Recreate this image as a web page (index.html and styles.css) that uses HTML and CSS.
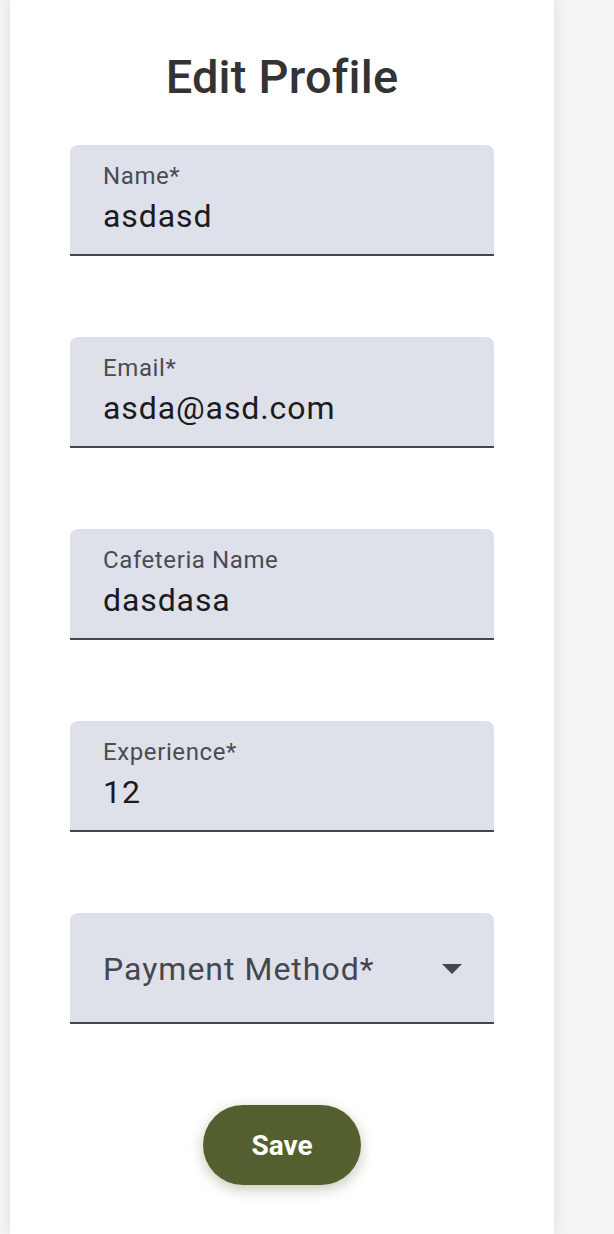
FILE: index.html
```html
<!DOCTYPE html>
<html lang="en">
<head>
<meta charset="utf-8">
<title>Edit Profile</title>
<link rel="stylesheet" href="styles.css">
</head>
<body>
<div class="page">
  <main class="card">
    <h1 class="title">Edit Profile</h1>
    <form class="form">
      <div class="field">
        <label class="label">Name*</label>
        <div class="value">asdasd</div>
      </div>
      <div class="field">
        <label class="label">Email*</label>
        <div class="value">asda@asd.com</div>
      </div>
      <div class="field">
        <label class="label">Cafeteria Name</label>
        <div class="value">dasdasa</div>
      </div>
      <div class="field">
        <label class="label">Experience*</label>
        <div class="value">12</div>
      </div>
      <div class="field select">
        <span class="placeholder">Payment Method*</span>
        <svg class="arrow" width="20" height="10" viewBox="0 0 20 10"><path d="M0 0 L20 0 L10 10 Z" fill="#45464f"/></svg>
      </div>
      <div class="actions">
        <button type="button" class="save">Save</button>
      </div>
    </form>
  </main>
  <div class="side"></div>
</div>
</body>
</html>
```
FILE: styles.css
```css
* { box-sizing: border-box; }
html, body { margin: 0; padding: 0; }
body {
  background: #f4f4f4;
  font-family: Roboto, "Liberation Sans", sans-serif;
  height: 1234px;
  overflow: hidden;
}
.page {
  display: flex;
  height: 1234px;
}
.card {
  margin-left: 10px;
  width: 544px;
  height: 1234px;
  background: #ffffff;
  box-shadow: 0 0 12px rgba(0, 0, 0, 0.10);
  padding: 0 60px;
}
.title {
  margin: 0;
  padding-top: 49px;
  height: 145px;
  text-align: center;
  font-size: 47px;
  line-height: 56px;
  font-weight: 500;
  color: #333333;
  letter-spacing: 0.2px;
}
.form {
  display: flex;
  flex-direction: column;
  gap: 81px;
}
.field {
  height: 111px;
  background: #dfe1ea;
  border-radius: 8px 8px 0 0;
  border-bottom: 2px solid #45464f;
  padding: 17px 32px 0 33px;
  display: flex;
  flex-direction: column;
}
.label {
  font-size: 24px;
  line-height: 28px;
  color: #4a4b53;
  letter-spacing: 0.6px;
}
.value {
  margin-top: 7px;
  font-size: 32px;
  line-height: 38px;
  color: #1b1b1f;
  letter-spacing: 0.9px;
}
.select {
  flex-direction: row;
  align-items: center;
  justify-content: space-between;
  padding-top: 0;
}
.placeholder {
  font-size: 32px;
  line-height: 38px;
  color: #45464f;
  letter-spacing: 1px;
  margin-top: 2px;
}
.arrow { display: block; margin-top: 2px; }
.actions {
  display: flex;
  justify-content: center;
}
.save {
  width: 158px;
  height: 80px;
  border: none;
  border-radius: 40px;
  background: #545f2f;
  color: #ffffff;
  font-family: Roboto, "Liberation Sans", sans-serif;
  font-weight: 700;
  font-size: 28px;
  box-shadow: 0 4px 14px rgba(84, 95, 47, 0.35);
}
.side { flex: 1; }
```
